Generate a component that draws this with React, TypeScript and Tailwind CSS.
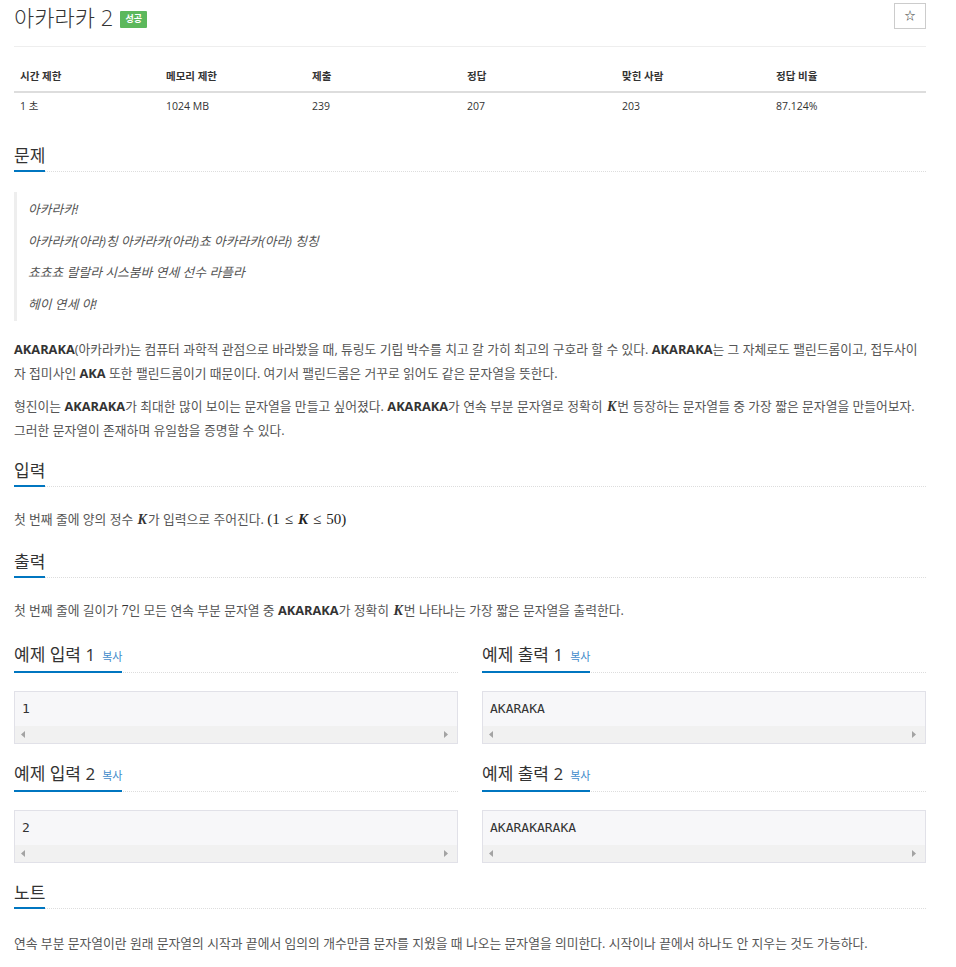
import React from "react";

const body = "font-['Open_Sans','Noto_Sans_CJK_KR',sans-serif]";

function K() {
  return (
    <span className="font-['Liberation_Serif',serif] italic font-semibold text-[14px] leading-none text-[#333] px-[1px]">K</span>
  );
}

function SectionTitle({ title, copy }: { title: string; copy?: boolean }) {
  return (
    <div className="border-b border-dotted border-[#ddd]">
      <h2 className="inline-flex items-baseline -mb-px border-b-2 border-[#0076c0] pb-[4px] text-[17px] leading-[20px] text-[#333]">
        {title}
        {copy && <span className="ml-[7px] text-[11px] text-[#428bca]">복사</span>}
      </h2>
    </div>
  );
}

function SampleBox({ value }: { value: string }) {
  return (
    <div className="mt-[18px] border border-[#e1e1e8] bg-[#f7f7f9]">
      <pre className="h-[34px] px-[7px] pt-[8px] font-['DejaVu_Sans_Mono',monospace] text-[13px] leading-[18px] text-[#333]">
        {value}
      </pre>
      <div className="flex h-[17px] items-center justify-between bg-[#f1f1f1] px-[6px]">
        <svg width="5" height="7" viewBox="0 0 5 7">
          <path d="M4 0 L0 3.5 L4 7 Z" fill="#a3a3a3" />
        </svg>
        <svg width="5" height="7" viewBox="0 0 5 7" className="mr-[3px]">
          <path d="M1 0 L5 3.5 L1 7 Z" fill="#a3a3a3" />
        </svg>
      </div>
    </div>
  );
}

const stats = [
  { label: "시간 제한", value: "1 초", w: "w-[146px]" },
  { label: "메모리 제한", value: "1024 MB", w: "w-[146px]" },
  { label: "제출", value: "239", w: "w-[155px]" },
  { label: "정답", value: "207", w: "w-[155px]" },
  { label: "맞힌 사람", value: "203", w: "w-[154px]" },
  { label: "정답 비율", value: "87.124%", w: "flex-1" },
];

export default function App() {
  return (
    <div className={`${body} bg-white pl-[14px] pr-[30px] text-[#555]`}>
      <div className="border-b border-[#eee] pb-[17px]">
        <div className="mt-[3px] flex h-[26px] items-start justify-between">
          <div className="flex items-center">
            <h1 className="text-[22px] leading-[30px] -mt-[1px] font-light text-[#333]">아카라카 2</h1>
            <span className="ml-[7px] mt-[3px] inline-flex h-[17px] w-[27px] items-center justify-center rounded-[1px] bg-[#5cb85c] text-[9px] font-bold text-white">
              성공
            </span>
          </div>
          <button className="flex h-[26px] w-[32px] items-center justify-center border border-[#ccc] bg-white text-[11px] text-[#333]">
            ☆
          </button>
        </div>
      </div>

      <div className="mt-[14px] text-[10.5px] text-[#333]">
        <div className="flex border-b-2 border-[#ddd]">
          {stats.map((s) => (
            <div key={s.label} className={`${s.w} px-[6px] pt-[5px] pb-[5px] font-bold leading-[20px]`}>
              {s.label}
            </div>
          ))}
        </div>
        <div className="flex">
          {stats.map((s) => (
            <div key={s.label} className={`${s.w} px-[6px] pt-[3px] pb-[5px] leading-[20px]`}>
              {s.value}
            </div>
          ))}
        </div>
      </div>

      <div className="mt-[23px]">
        <SectionTitle title="문제" />
        <blockquote className="mt-[20px] border-l-[3px] border-[#eee] pl-[11px] py-[5px] text-[12.8px] italic leading-[24px] text-[#555]">
          <p>아카라카!</p>
          <p className="mt-[7.5px]">아카라카(아라)칭 아카라카(아라)쵸 아카라카(아라) 칭칭</p>
          <p className="mt-[7.5px]">쵸쵸쵸 랄랄라 시스붐바 연세 선수 라플라</p>
          <p className="mt-[7.5px]">헤이 연세 야!</p>
        </blockquote>
        <div className="mt-[16px] text-[12.8px] leading-[24px]">
          <p>
            <b className="text-[#333]">AKARAKA</b>(아카라카)는 컴퓨터 과학적 관점으로 바라봤을 때, 튜링도 기립 박수를 치고 갈 가히
            최고의 구호라 할 수 있다. <b className="text-[#333]">AKARAKA</b>는 그 자체로도 팰린드롬이고, 접두사이자 접미사인{" "}
            <b className="text-[#333]">AKA</b> 또한 팰린드롬이기 때문이다. 여기서 팰린드롬은 거꾸로 읽어도 같은 문자열을 뜻한다.
          </p>
          <p className="mt-[9px]">
            형진이는 <b className="text-[#333]">AKARAKA</b>가 최대한 많이 보이는 문자열을 만들고 싶어졌다.{" "}
            <b className="text-[#333]">AKARAKA</b>가 연속 부분 문자열로 정확히 <K />번 등장하는 문자열들 중 가장 짧은 문자열을
            만들어보자. 그러한 문자열이 존재하며 유일함을 증명할 수 있다.
          </p>
        </div>
      </div>

      <div className="mt-[17px]">
        <SectionTitle title="입력" />
        <p className="mt-[20px] text-[12.8px] leading-[24px]">
          첫 번째 줄에 양의 정수 <K />가 입력으로 주어진다.{" "}
          <span className="font-['Liberation_Serif',serif] text-[15px] leading-none text-[#222]">
            (1<span className="mx-[5px]">≤</span>
            <span className="italic font-semibold">K</span>
            <span className="mx-[5px]">≤</span>50)
          </span>
        </p>
      </div>

      <div className="mt-[19px]">
        <SectionTitle title="출력" />
        <p className="mt-[20px] text-[12.8px] leading-[24px]">
          첫 번째 줄에 길이가 <span className="font-['Liberation_Serif',serif] text-[14px] leading-none text-[#333]">7</span>인 모든 연속 부분
          문자열 중 <b className="text-[#333]">AKARAKA</b>가 정확히 <K />번 나타나는 가장 짧은 문자열을 출력한다.
        </p>
      </div>

      <div className="mt-[21px] grid grid-cols-2 gap-x-6">
        <div>
          <SectionTitle title="예제 입력 1" copy />
          <SampleBox value="1" />
        </div>
        <div>
          <SectionTitle title="예제 출력 1" copy />
          <SampleBox value="AKARAKA" />
        </div>
        <div className="mt-[18px]">
          <SectionTitle title="예제 입력 2" copy />
          <SampleBox value="2" />
        </div>
        <div className="mt-[18px]">
          <SectionTitle title="예제 출력 2" copy />
          <SampleBox value="AKARAKARAKA" />
        </div>
      </div>

      <div className="mt-[18px] pb-[20px]">
        <SectionTitle title="노트" />
        <p className="mt-[22px] text-[12.8px] leading-[24px]">
          연속 부분 문자열이란 원래 문자열의 시작과 끝에서 임의의 개수만큼 문자를 지웠을 때 나오는 문자열을 의미한다. 시작이나 끝에서
          하나도 안 지우는 것도 가능하다.
        </p>
      </div>
    </div>
  );
}
